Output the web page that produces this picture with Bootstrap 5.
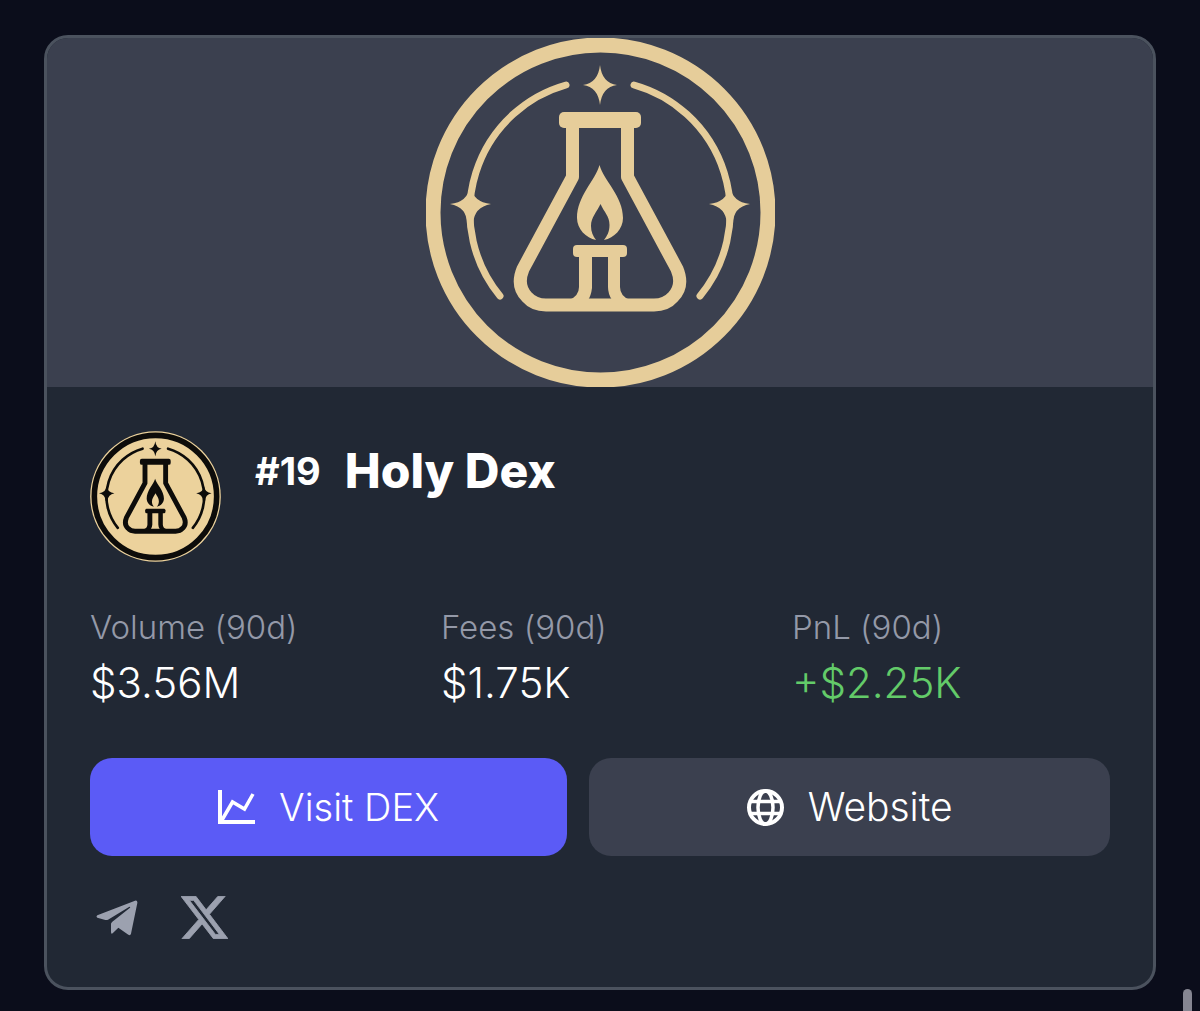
<!DOCTYPE html>
<html lang="en" data-bs-theme="dark">
<head>
<meta charset="utf-8">
<meta name="viewport" content="width=device-width, initial-scale=1">
<title>Holy Dex</title>
<link rel="stylesheet" href="https://cdn.jsdelivr.net/npm/bootstrap@5.3.0/dist/css/bootstrap.min.css">
<style>
body { background: #0b0d1b; color: #fff; font-family: Inter, "Liberation Sans", sans-serif; font-weight: 300; overflow: hidden; }
.page-wrap { padding: 35px 44px 20px; }
.dex-card { background: #212834; border: 3px solid #4b525e; border-radius: 24px; overflow: hidden; }
.dex-banner { background: #3b404f; color: #e6cd9a; }
.dex-banner svg { width: 349px; height: 349px; display: block; }
.dex-body { padding: 44px 43px 48px; }
.avatar { width: 131px; height: 131px; color: #0d0c0a; flex: none; }
.head-row { gap: 34px; }
.title-row { gap: 24px; height: 80px; }
.rank { font-size: 38px; font-weight: 700; }
.dex-name { font-size: 48px; font-weight: 800; line-height: 80px; }
.stats { display: grid; grid-template-columns: repeat(3, 1fr); gap: 33px; margin: 41px 0 43px; }
.stats dt { font-size: 33px; line-height: 48px; font-weight: 300; color: #9499a8; }
.stats dd { font-size: 42px; line-height: 64px; margin: 0; }
.stats .gain { color: #63cb69; }
.actions { gap: 22px; }
.act { height: 98px; border-radius: 22px; font-size: 38px; font-weight: 300; gap: 24px; padding: 0; border: 0; color: #fff; }
.act-visit, .act-visit:hover { background: #5b5bf6; color: #fff; flex: 11 1 0; }
.act-site, .act-site:hover { background: #3b404f; color: #fff; flex: 12 1 0; }
.act-site { font-size: 39px; }
.socials { margin-top: 40px; gap: 43px; padding-left: 6px; }
.socials a { color: #9ca1af; }
.socials svg { display: block; }
.scroll-thumb { right: 8px; top: 989px; bottom: -8px; width: 9px; border-radius: 5px; background: #868692; }
</style>
<script src="https://cdn.jsdelivr.net/npm/bootstrap@5.3.0/dist/js/bootstrap.bundle.min.js"></script>
</head>
<body>
<svg width="0" height="0" class="position-absolute" aria-hidden="true">
  <symbol id="emblem" viewBox="0 0 349 349">
    <g fill="none" stroke="currentColor" stroke-linecap="round" stroke-linejoin="round">
      <path stroke-width="7" d="M140 47A132 132 0 0 0 74 258M208 47A132 132 0 0 1 274 258"/>
      <path stroke-width="13" d="M146.500 86V139L97 231Q90 248 101 259Q108 267 120 267H228Q240 267 247 259Q258 248 251 231L201.500 139V86"/>
    </g>
    <g fill="currentColor">
      <path d="M174 27Q176 45 191 47Q176 49 174 67Q172 49 157 47Q172 45 174 27Z"/>
      <path d="M44 148Q47 164 65 166Q48 169 47 186H41Q41 169 24 166Q42 164 44 148Z"/>
      <path d="M304 148Q301 164 283 166Q300 169 301 186H307Q307 169 324 166Q306 164 304 148Z"/>
      <rect x="133" y="74" width="82" height="16" rx="5"/>
      <path fill-rule="evenodd" d="M173.500 127C178 143 197 158 197 180C197 191 188 200 178 202C181 198 183.500 194 183.500 187C183.500 178 178 174 174.500 166C171 174 165 179 165 188C165 194 167 198 170 202C160 200 151 191 151 180C151 158 169 143 173.500 127Z"/>
      <rect x="147" y="207" width="54" height="12" rx="4"/>
      <path d="M153 216H166V250Q165 258 162 262H143Q153 258 153 249ZM182 216H194V249Q194 258 204 262H186Q182 256 182 249Z"/>
    </g>
  </symbol>
</svg>

<main class="page-wrap">
  <article class="dex-card">
    <div class="dex-banner d-flex justify-content-center">
      <svg viewBox="0 0 349 349" role="img" aria-label="Holy Dex banner">
        <circle cx="174.500" cy="174.500" r="167.500" fill="none" stroke="currentColor" stroke-width="15"/>
        <use href="#emblem"/>
      </svg>
    </div>
    <div class="dex-body">
      <header class="head-row d-flex">
        <svg class="avatar" viewBox="0 0 349 349" role="img" aria-label="Holy Dex logo">
          <circle cx="174.500" cy="174.500" r="174" fill="#ecd29c"/>
          <circle cx="174.500" cy="174.500" r="163" fill="none" stroke="currentColor" stroke-width="15"/>
          <use href="#emblem"/>
        </svg>
        <div class="title-row d-flex align-items-center">
          <span class="rank">#19</span>
          <h1 class="dex-name m-0">Holy Dex</h1>
        </div>
      </header>
      <dl class="stats">
        <div><dt>Volume (90d)</dt><dd>$3.56M</dd></div>
        <div><dt>Fees (90d)</dt><dd>$1.75K</dd></div>
        <div><dt>PnL (90d)</dt><dd class="gain">+$2.25K</dd></div>
      </dl>
      <div class="actions d-flex">
        <button type="button" class="btn act act-visit d-flex align-items-center justify-content-center">
          <svg width="37" height="34" viewBox="0 0 37 34" fill="none" stroke="#fff" aria-hidden="true"><path stroke-width="4" d="M2 0V32H37"/><path stroke-width="3.500" d="M4 30L14.500 12L26.500 19L35 4"/></svg>
          <span>Visit DEX</span>
        </button>
        <button type="button" class="btn act act-site d-flex align-items-center justify-content-center">
          <svg width="37" height="37" viewBox="0 0 37 37" fill="none" stroke="#fff" stroke-width="3.500" aria-hidden="true"><circle cx="18.500" cy="18.500" r="16.500" stroke-width="4"/><path d="M3 12.500H34M3 24.500H34"/><ellipse cx="18.500" cy="18.500" rx="7.500" ry="16.500"/></svg>
          <span>Website</span>
        </button>
      </div>
      <nav class="socials d-flex align-items-center" aria-label="Social links">
        <a href="#" aria-label="Telegram"><svg width="42" height="36" viewBox="200 56 126 108" fill="currentColor"><path d="M204 102L317 58Q325 56 324 65L305 157Q303 164 297 160L267 139L250 156Q245 159 245 152V127Q246 124 249 121L302 79Q304 75 299 77L236 115Q232 117 228 116L204 109Q199 106 204 102Z"/></svg></a>
        <a href="#" aria-label="X"><svg width="47" height="43" viewBox="1.250 2.250 21.600 19.500" fill="currentColor" stroke="currentColor" stroke-width="0.400"><path d="M18.244 2.250h3.308l-7.227 8.260 8.502 11.240H16.170l-5.214-6.817L4.990 21.750H1.680l7.730-8.835L1.254 2.250H8.080l4.713 6.231zm-1.161 17.520h1.833L7.084 4.126H5.117z"/></svg></a>
      </nav>
    </div>
  </article>
</main>
<div class="scroll-thumb position-fixed" aria-hidden="true"></div>
</body>
</html>
